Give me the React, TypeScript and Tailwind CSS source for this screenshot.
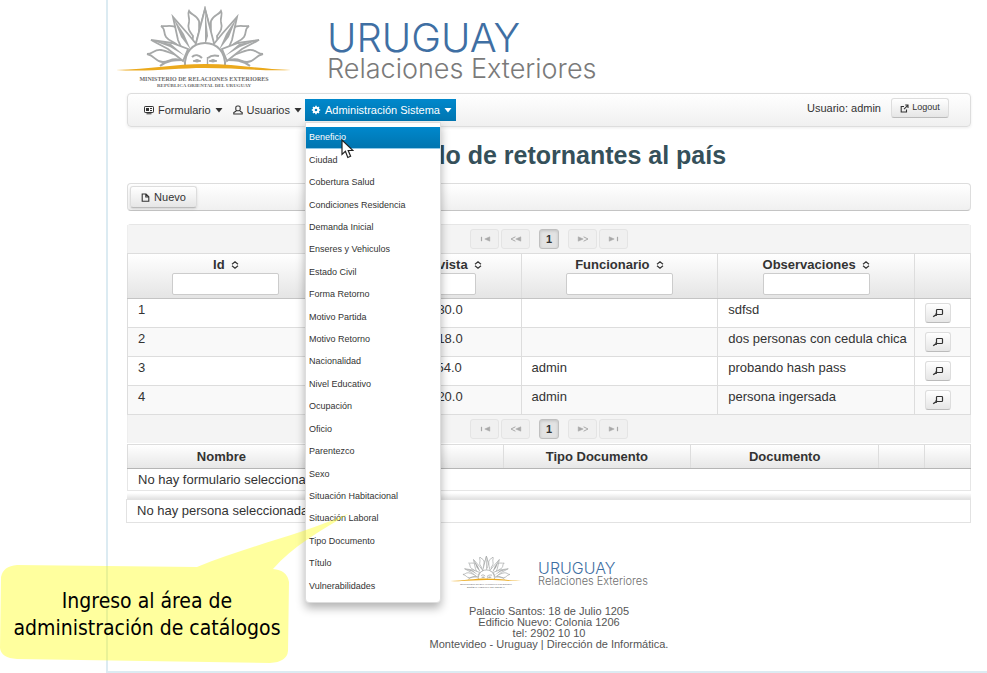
import React from "react";

const catalogs = [
  "Beneficio",
  "Ciudad",
  "Cobertura Salud",
  "Condiciones Residencia",
  "Demanda Inicial",
  "Enseres y Vehiculos",
  "Estado Civil",
  "Forma Retorno",
  "Motivo Partida",
  "Motivo Retorno",
  "Nacionalidad",
  "Nivel Educativo",
  "Ocupación",
  "Oficio",
  "Parentezco",
  "Sexo",
  "Situación Habitacional",
  "Situación Laboral",
  "Tipo Documento",
  "Título",
  "Vulnerabilidades",
];

const rows = [
  { id: "1", date: "2013-5-16, 14:30:30.0", user: "", note: "sdfsd" },
  { id: "2", date: "2013-5-17, 10:12:18.0", user: "", note: "dos personas con cedula chica" },
  { id: "3", date: "2013-5-20, 11:42:54.0", user: "admin", note: "probando hash pass" },
  { id: "4", date: "2013-5-21, 15:08:20.0", user: "admin", note: "persona ingersada" },
];

function SunHalf() {
  return (
    <g fill="#fff" stroke="#a6a8a8" strokeWidth="1.8" strokeLinejoin="miter">
      <path d="M192 47 L193 36 C190 32 187 29 189 22 C190 17 187 15 189 11 C191 15 197 15 199 21 C200 27 197 30 202 38" />
      <path d="M183 51 L176 44 C173 41 169 41 166 37 C163 33 166 29 161 26 C166 27 172 24 177 28 C181 32 179 37 190 46" />
      <path d="M180 60 C172 57 169 62 163 62 C155 62 156 56 147 54 C153 54 154 49 161 50 C168 51 173 55 183 57" />
      <path d="M183 60 C176 60 167 60 160 66" fill="none" />
      <path d="M205 9 L195 47 L215 47 Z" />
      <path d="M205 9 L202 36 L205 46 Z" fill="#a6a8a8" stroke="none" />
      <path d="M173 17 L178 40 L184 54 L197 45 L188 34 Z" />
      <path d="M173 17 L181 37 L191 50 L184 34 Z" fill="#a6a8a8" stroke="none" />
      <path d="M151 40 L168 49 L183 61 L188 49 L172 43 Z" />
      <path d="M151 40 L170 47 L185 56 L171 44 Z" fill="#a6a8a8" stroke="none" />
    </g>
  );
}

function SunFace() {
  return (
    <g fill="none" stroke="#a6a8a8">
      <path d="M185 67 C184 52 193 43 205 43 C217 43 226 52 225 67" fill="#fff" strokeWidth="2" />
      <path d="M192 57 C195 54 199 55 202 58 M208 58 C211 55 215 55 219 56" strokeWidth="2" />
      <path d="M193 61 Q197 58 201 61 Q197 63 193 61 M209 61 Q213 58 217 61 Q213 63 209 61" fill="#a6a8a8" strokeWidth="1" />
      <path d="M207.500 57 V65" strokeWidth="1.4" />
    </g>
  );
}

function SunLogo({ className }: { className: string }) {
  return (
    <svg viewBox="115 6 178 84" className={className} role="img" aria-label="Ministerio de Relaciones Exteriores">
      <SunHalf />
      <g transform="translate(410 0) scale(-1 1)">
        <SunHalf />
      </g>
      <SunFace />
      <path d="M116 70 C150 69 175 64 205 64 C235 64 260 69 291 70 C260 71 235 68 205 68 C175 68 150 72 116 70 Z" fill="#eba91c" />
      <text x="204" y="81" textAnchor="middle" className="fill-[#6b6b6b] font-['Liberation_Serif',serif] text-[6px] font-bold">
        MINISTERIO DE RELACIONES EXTERIORES
      </text>
      <text x="204" y="87" textAnchor="middle" className="fill-[#6b6b6b] font-['Liberation_Serif',serif] text-[5px] font-bold">
        REPÚBLICA ORIENTAL DEL URUGUAY
      </text>
    </svg>
  );
}

function Caret() {
  return (
    <svg viewBox="0 0 8 5" className="h-[5px] w-2" fill="currentColor" aria-hidden="true">
      <path d="M0.5 0 H7.5 L4 4.5 Z" />
    </svg>
  );
}

function CardIcon() {
  return (
    <svg viewBox="0 0 10 10" className="size-[10px]" fill="none" stroke="#333" aria-hidden="true">
      <path d="M1.2 1.5 H8.8 Q9.5 1.5 9.5 2.2 V6.8 Q9.5 7.5 8.8 7.5 H1.2 Q0.5 7.5 0.5 6.8 V2.2 Q0.5 1.5 1.2 1.5 Z M2.5 8.8 H7.5" strokeWidth="1" />
      <path d="M2 3 H5 V6 H2 Z" fill="#333" stroke="none" />
      <path d="M6 3.5 H8 M6 5.5 H8" />
    </svg>
  );
}

function UserIcon() {
  return (
    <svg viewBox="0 0 10 10" className="size-[10px]" fill="none" stroke="#333" aria-hidden="true">
      <rect x="2.8" y="1" width="4.4" height="4.8" rx="1.6" strokeWidth="1.1" />
      <path d="M3.2 6 L0.8 7.6 V9 H9.2 V7.6 L6.8 6" strokeWidth="1.1" />
    </svg>
  );
}

function GearIcon() {
  return (
    <svg viewBox="0 0 10 10" className="size-[10px]" fill="none" stroke="#fff" aria-hidden="true">
      <circle cx="5" cy="5" r="2.3" strokeWidth="2" />
      <path d="M5 0.8 V2.4 M5 7.6 V9.2 M0.8 5 H2.4 M7.6 5 H9.2 M2 2 L3.2 3.2 M6.8 6.8 L8 8 M2 8 L3.2 6.8 M6.8 3.2 L8 2" strokeWidth="1.5" />
    </svg>
  );
}

function SortIcon() {
  return (
    <svg viewBox="0 0 8 8" className="size-2" fill="none" stroke="#333" strokeWidth="1.2" aria-hidden="true">
      <path d="M1 3.2 L4 0.8 L7 3.2 M1 4.8 L4 7.2 L7 4.8" />
    </svg>
  );
}

function SearchIcon() {
  return (
    <svg viewBox="0 0 12 10" className="h-[10px] w-3" fill="none" stroke="#333" aria-hidden="true">
      <rect x="4.5" y="1.5" width="6" height="5" rx="0.8" strokeWidth="1.2" />
      <path d="M5 6 L1.2 8.8 M4.2 5.2 V8" strokeWidth="1.4" />
    </svg>
  );
}

function Arrows({ kind }: { kind: "first" | "prev" | "next" | "last" }) {
  const flip = kind === "next" || kind === "last";
  const edge = kind === "first" || kind === "last";
  return (
    <svg viewBox="0 0 12 6" className="h-[6px] w-3" fill="#a8a8a8" stroke="#a8a8a8" aria-hidden="true">
      <g transform={flip ? "translate(12 0) scale(-1 1)" : undefined}>
        <path d="M10.8 0.8 V5.2 L5.8 3 Z" strokeWidth="0.5" />
        {edge ? <path d="M2.5 0.8 V5.2" strokeWidth="1.2" /> : <path d="M5.4 0.8 L1 3 L5.4 5.2" fill="none" />}
      </g>
    </svg>
  );
}

function Pager() {
  const off =
    "flex h-5 w-[29px] items-center justify-center rounded-[3px] border border-[#e4e4e4] bg-[#f0f0f0]";
  return (
    <div className="flex h-7 items-center justify-center gap-[2px] border-x border-[#eee] bg-[#f4f4f4]">
      <button type="button" aria-label="Primera página" className={off}><Arrows kind="first" /></button>
      <button type="button" aria-label="Página anterior" className={off}><Arrows kind="prev" /></button>
      <button
        type="button"
        className="mx-[7px] flex h-5 w-5 items-center justify-center rounded-[3px] border border-[#c0c0c0] bg-[#e3e3e3] text-[11px] font-bold shadow-[inset_0_1px_3px_rgba(0,0,0,0.15)]"
      >
        1
      </button>
      <button type="button" aria-label="Página siguiente" className={off}><Arrows kind="next" /></button>
      <button type="button" aria-label="Última página" className={off}><Arrows kind="last" /></button>
    </div>
  );
}

function FilterHead({ label }: { label: string }) {
  return (
    <th className="border border-t-[#ddd] border-b-[#c4c4c4] border-x-[#ddd] p-0 pt-[3px] align-top">
      <div className="flex items-center justify-center gap-[6px] leading-4">
        {label}
        <SortIcon />
      </div>
      <input
        aria-label={`Filtrar por ${label}`}
        className="mx-auto block h-[22px] w-[107px] rounded-[2px] border border-[#ccc] bg-white"
      />
    </th>
  );
}

const button = "border border-[#ddd] border-b-[#bbb] bg-linear-to-b from-white to-[#e6e6e6] rounded-[3px]";

export default function App() {
  return (
    <div className="relative min-h-screen overflow-hidden bg-white font-['Liberation_Sans',Arial,sans-serif] text-[13px] text-[#333]">
      <div className="ml-[106px] border-b-2 border-l-2 border-[#dcebf2] pr-4 pl-[19px]">
        <header className="-ml-3 flex h-[93px] items-start pt-[6px]">
          <SunLogo className="h-[84px] w-[178px] shrink-0" />
          <div className="ml-[34px] pt-[12px] font-['Inter','Liberation_Sans',sans-serif] font-light">
            <div className="text-[40px] leading-10 text-[#3f6fa3]">URUGUAY</div>
            <div className="text-[27px] leading-[22px] text-[#7a7a7a]">Relaciones Exteriores</div>
          </div>
        </header>

        <nav className="relative z-10 flex h-[34px] items-center rounded-[4px] border border-[#ddd] bg-linear-to-b from-white to-[#f0f0f0] pr-[21px] pl-3 text-[11px] shadow-[0_1px_3px_rgba(0,0,0,0.08)]">
          <div className="flex items-center gap-[2px]">
            <button type="button" className="flex h-[22px] items-center gap-1 px-1"><CardIcon />Formulario<Caret /></button>
            <button type="button" className="flex h-[22px] items-center gap-1 pr-px pl-1"><UserIcon />Usuarios<Caret /></button>
            <div className="relative">
              <button type="button" className="flex h-[22px] items-center gap-1 bg-linear-to-b from-[#0088cc] to-[#0075b0] pr-1 pl-[6px] text-white">
                <GearIcon />Administración Sistema<Caret />
              </button>
              <ul className="absolute top-[23px] left-0 flex h-[481px] w-[136px] flex-col rounded-b-[4px] border border-[#ddd] bg-white pt-[4px] pb-[4px] text-[9px] shadow-[0_5px_10px_rgba(0,0,0,0.3)]">
                {catalogs.map((name, i) => (
                  <li key={name} className="relative flex-1">
                    <a
                      href="#"
                      className={
                        i === 0
                          ? "flex h-[22px] items-center border-b border-[#8fc9e8] bg-linear-to-b from-[#0088cc] to-[#0075b0] px-[3px] text-white"
                          : "flex h-[22px] items-center px-[3px]"
                      }
                    >
                      {name}
                    </a>
                    {i === 0 && (
                      <svg viewBox="0 0 13 20" className="absolute top-3 left-[35px] z-10 h-5 w-[13px]" aria-hidden="true">
                        <path d="M1 1 V15.5 L4.4 12.4 L6.8 18.5 L9.6 17.3 L7.2 11.5 H12 Z" fill="#fff" stroke="#222" strokeWidth="1.2" />
                      </svg>
                    )}
                  </li>
                ))}
              </ul>
            </div>
          </div>
          <div className="ml-auto flex items-center gap-[10px] self-start pt-1">
            <span>Usuario: admin</span>
            <button type="button" className={`flex h-5 w-[58px] items-center justify-center gap-[3px] text-[9px] ${button}`}>
              <svg viewBox="0 0 9 9" className="size-[9px]" fill="none" stroke="#333" aria-hidden="true">
                <path d="M4 2.5 H1.2 V8 H6.5 V5.5 M4 5.2 L7.8 1.3 M5.2 1 H8 V4" strokeWidth="1.1" />
              </svg>
              Logout
            </button>
          </div>
        </nav>

        <h1 className="mt-[14px] text-center text-[25px] leading-7 font-bold text-[#35505a]">Listado de retornantes al país</h1>

        <div className="mt-[14px] flex h-7 items-center rounded-[4px] border border-[#ddd] border-b-[#c4c4c4] bg-linear-to-b from-white to-[#f0f0f0] pl-[2px]">
          <button type="button" className={`flex h-[22px] w-[67px] items-center justify-center gap-1 text-[11px] shadow-sm ${button}`}>
            <svg viewBox="0 0 9 9" className="size-[9px]" fill="none" stroke="#333" aria-hidden="true">
              <path d="M1.2 1 H5 L7.8 3.8 V8.2 H1.2 Z M4.8 1 V4 H7.8" strokeWidth="1.1" />
            </svg>
            Nuevo
          </button>
        </div>

        <section className="mt-[13px] rounded-t-[4px] border-t border-[#e6e6e6]">
          <Pager />
          <table className="w-full table-fixed border-collapse">
            <colgroup>
              <col />
              <col />
              <col />
              <col />
              <col className="w-14" />
            </colgroup>
            <thead>
              <tr className="h-[45px] bg-linear-to-b from-white to-[#e4e4e4]">
                <FilterHead label="Id" />
                <FilterHead label="Fecha Entrevista" />
                <FilterHead label="Funcionario" />
                <FilterHead label="Observaciones" />
                <th className="border border-t-[#ddd] border-b-[#c4c4c4] border-x-[#ddd]" />
              </tr>
            </thead>
            <tbody>
              {rows.map((r) => (
                <tr key={r.id} className="h-[29px] bg-white even:bg-[#f9f9f9]">
                  {[r.id, r.date, r.user, r.note].map((cell, i) => (
                    <td key={i} className="border border-[#ddd] py-0 pr-0 pl-[10px] align-top leading-[22px] whitespace-nowrap">{cell}</td>
                  ))}
                  <td className="border border-[#ddd] py-0 pr-0 pl-[10px]">
                    <button type="button" aria-label={`Ver formulario ${r.id}`} className={`flex h-5 w-[26px] items-center justify-center ${button}`}>
                      <SearchIcon />
                    </button>
                  </td>
                </tr>
              ))}
            </tbody>
          </table>
          <Pager />
        </section>

        <table className="mt-px w-full table-fixed border-collapse">
          <colgroup>
            <col />
            <col />
            <col />
            <col />
            <col className="w-[46px]" />
            <col className="w-[46px]" />
          </colgroup>
          <thead>
            <tr className="h-6 bg-linear-to-b from-white to-[#e6e6e6]">
              {["Nombre", "Apellido", "Tipo Documento", "Documento", "", ""].map((h, i) => (
                <th key={i} className="border border-[#ddd] border-b-[#b5b5b5] p-0 leading-5">{h}</th>
              ))}
            </tr>
          </thead>
          <tbody>
            <tr className="h-[22px]">
              <td colSpan={6} className="border border-[#e6e6e6] py-0 pr-0 pl-[10px] leading-5">No hay formulario seleccionado</td>
            </tr>
          </tbody>
        </table>

        <div className="mt-[2px] h-[6px] bg-linear-to-b from-white to-[#e2e2e2]" />
        <div className="-ml-px h-6 border border-[#e2e2e2] pl-[10px] leading-[22px]">No hay persona seleccionada</div>

        <footer className="pt-[32px] pb-[21px]">
          <div className="flex items-start justify-center gap-4">
            <SunLogo className="h-[34px] w-[72px]" />
            <div className="pt-[5px] font-['Inter','Liberation_Sans',sans-serif] font-light">
              <div className="text-[16px] leading-4 text-[#3f6fa3]">URUGUAY</div>
              <div className="text-[11px] leading-[10px] text-[#6e6e6e]">Relaciones Exteriores</div>
            </div>
          </div>
          <address className="mt-[17px] text-center text-[11px] leading-[11px] text-[#555] not-italic">
            Palacio Santos: 18 de Julio 1205
            <br />
            Edificio Nuevo: Colonia 1206
            <br />
            tel: 2902 10 10
            <br />
            Montevideo - Uruguay | Dirección de Informática.
          </address>
        </footer>
      </div>

      <aside className="absolute top-[513px] left-0 z-20 h-[150px] w-[350px]">
        <svg viewBox="0 0 350 150" className="absolute inset-0 h-full w-full" aria-hidden="true">
          <path
            d="M17 52 L197 54 C245 34 300 22 350 0 C320 18 292 34 273 56 Q287 57 289 69 L288 138 Q287 149 270 150 L17 146 Q1 145 0 135 L1 64 Q3 53 17 52 Z"
            fill="#ffff00"
            fillOpacity="0.38"
          />
        </svg>
        <p className="relative w-[294px] pt-[75px] text-center font-['DejaVu_Sans_Condensed','Noto_Sans',sans-serif] text-[21px] leading-[27px] text-black">
          Ingreso al área de
          <br />
          administración de catálogos
        </p>
      </aside>
    </div>
  );
}
